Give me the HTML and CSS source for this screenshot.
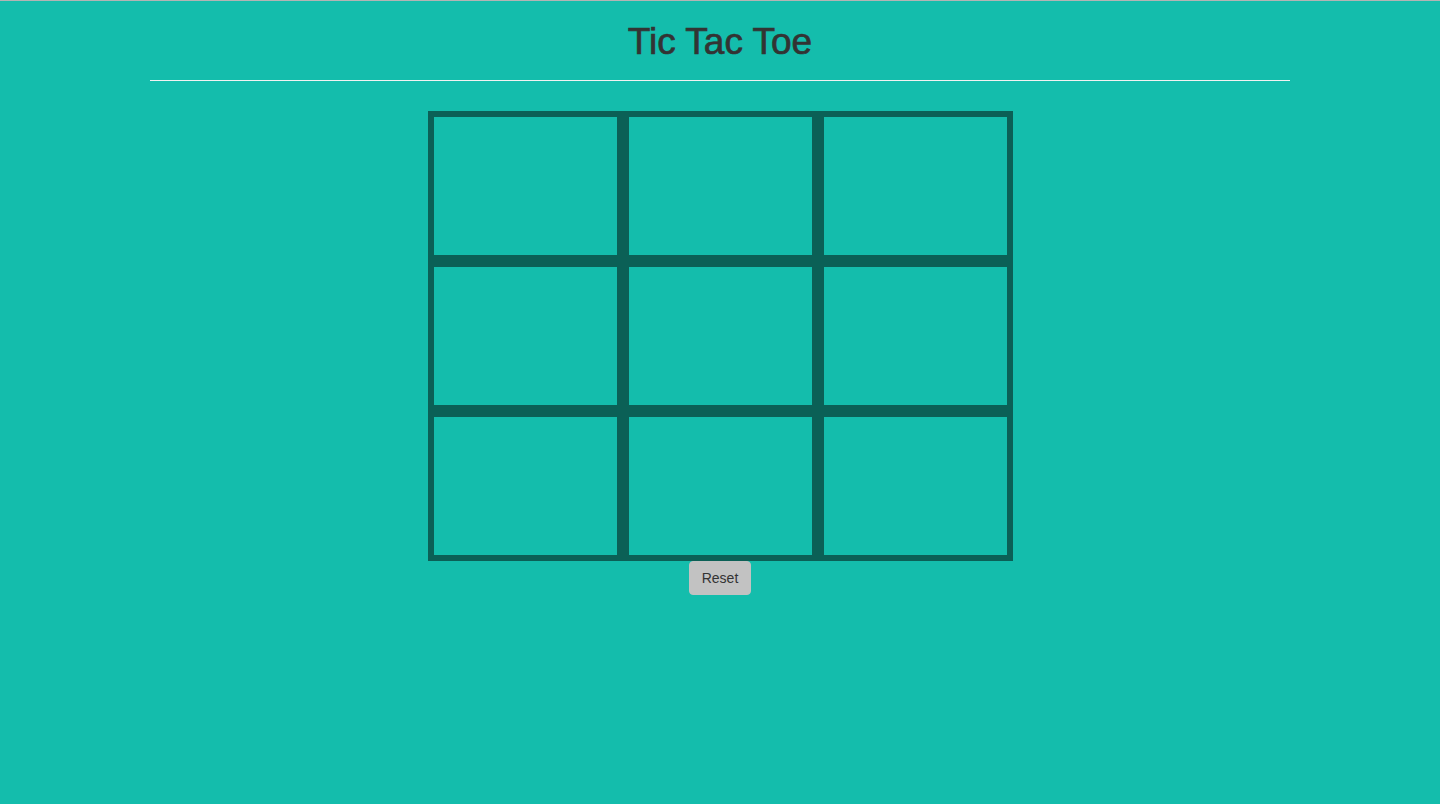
FILE: index.html
```html
<!DOCTYPE html>
<html lang="en">
<head>
<meta charset="utf-8">
<title>Tic Tac Toe</title>
<link rel="stylesheet" href="styles.css">
</head>
<body>
<div class="container">
  <h1 class="title">Tic Tac Toe</h1>
  <hr class="rule">
  <div class="board">
    <div class="cell"></div>
    <div class="cell"></div>
    <div class="cell"></div>
    <div class="cell"></div>
    <div class="cell"></div>
    <div class="cell"></div>
    <div class="cell"></div>
    <div class="cell"></div>
    <div class="cell"></div>
  </div>
  <div class="actions">
    <button class="reset" type="button">Reset</button>
  </div>
</div>
</body>
</html>
```
FILE: styles.css
```css
html, body {
  margin: 0;
  padding: 0;
}
body {
  background: #14bdac;
  border-top: 1px solid #b4b4b4;
  font-family: "Liberation Sans", Arial, sans-serif;
  color: #333;
  min-height: 803px;
}
.container {
  width: 1140px;
  margin: 0 auto;
}
.title {
  margin: 20px 0 0;
  font-size: 37px;
  line-height: 41px;
  font-weight: normal;
  text-align: center;
  color: #333;
  -webkit-text-stroke: 0.7px #333;
}
.rule {
  margin: 18px 0 0;
  border: 0;
  border-top: 1px solid #f2f2f2;
  height: 0;
}
.board {
  margin: 30px auto 0;
  display: grid;
  grid-template-columns: repeat(3, 195px);
  grid-template-rows: repeat(3, 150px);
  width: 585px;
}
.cell {
  border: 6px solid #0b6056;
  box-sizing: border-box;
}
.actions {
  display: flex;
  justify-content: center;
}
.reset {
  font-family: "Liberation Sans", Arial, sans-serif;
  font-size: 14px;
  line-height: 20px;
  padding: 6px 12px;
  border: 1px solid #c2c2c2;
  border-radius: 4px;
  background: #c2c2c2;
  color: #333;
  cursor: pointer;
}
```
